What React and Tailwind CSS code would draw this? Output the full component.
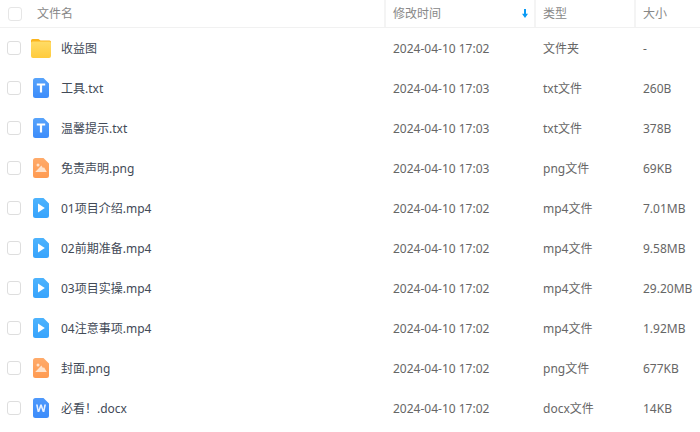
const rows = [
  ["folder", "收益图", "2024-04-10 17:02", "文件夹", "-"],
  ["txt", "工具.txt", "2024-04-10 17:03", "txt文件", "260B"],
  ["txt", "温馨提示.txt", "2024-04-10 17:03", "txt文件", "378B"],
  ["png", "免责声明.png", "2024-04-10 17:03", "png文件", "69KB"],
  ["mp4", "01项目介绍.mp4", "2024-04-10 17:02", "mp4文件", "7.01MB"],
  ["mp4", "02前期准备.mp4", "2024-04-10 17:02", "mp4文件", "9.58MB"],
  ["mp4", "03项目实操.mp4", "2024-04-10 17:02", "mp4文件", "29.20MB"],
  ["mp4", "04注意事项.mp4", "2024-04-10 17:02", "mp4文件", "1.92MB"],
  ["png", "封面.png", "2024-04-10 17:02", "png文件", "677KB"],
  ["docx", "必看！.docx", "2024-04-10 17:02", "docx文件", "14KB"],
];

const SHEET = "M2.5 0H10.5L16 5.5V17.5A2.5 2.5 0 0 1 13.5 20H2.5A2.5 2.5 0 0 1 0 17.5V2.5A2.5 2.5 0 0 1 2.5 0Z";

function FileBase({ id, from, to, children }) {
  return (
    <svg width="16" height="20" viewBox="0 0 16 20">
      <defs>
        <linearGradient id={id} x1="0" y1="0" x2="0" y2="1">
          <stop offset="0" stopColor={from} />
          <stop offset="1" stopColor={to} />
        </linearGradient>
      </defs>
      <path d={SHEET} fill={`url(#${id})`} />
      {children}
    </svg>
  );
}

function Icon({ type, idx }) {
  if (type === "folder") {
    return (
      <svg width="20" height="19" viewBox="0 0 20 19">
        <defs>
          <linearGradient id="folderg" x1="0" y1="0" x2="0" y2="1">
            <stop offset="0" stopColor="#ffdc66" />
            <stop offset="1" stopColor="#ffcb3d" />
          </linearGradient>
        </defs>
        <path d="M1.5 0H7.5L9.5 1.5H18.5A1.5 1.5 0 0 1 20 3V6H0V1.5A1.5 1.5 0 0 1 1.5 0Z" fill="#fbb41c" />
        <path d="M1.5 2.5H18.5A1.5 1.5 0 0 1 20 4V17A2 2 0 0 1 18 19H2A2 2 0 0 1 0 17V4A1.5 1.5 0 0 1 1.5 2.5Z" fill="url(#folderg)" />
      </svg>
    );
  }
  if (type === "txt") {
    return (
      <FileBase id={`t${idx}`} from="#58a4fb" to="#3c8cfb">
        <path d="M3.8 5.5H12.2V7.6H9.1V14.5H6.9V7.6H3.8Z" fill="#fff" />
      </FileBase>
    );
  }
  if (type === "png") {
    return (
      <FileBase id={`p${idx}`} from="#ffab6b" to="#ff9a50">
        <circle cx="5" cy="7" r="1.5" fill="#ffe3cc" />
        <path d="M2.2 14L8.4 7.5L10 10L11 9.2L13.8 14Z" fill="#ffe3cc" />
      </FileBase>
    );
  }
  if (type === "mp4") {
    return (
      <FileBase id={`m${idx}`} from="#4db3fd" to="#36a3fd">
        <path d="M5 5.5L11.8 10L5 14.5Z" fill="#fff" />
      </FileBase>
    );
  }
  return (
    <FileBase id={`d${idx}`} from="#4f99fb" to="#3c8cfb">
      <path d="M3 6.5H4.7L5.6 11.5L7.2 6.5H8.8L10.4 11.5L11.3 6.5H13L11.4 14H9.7L8 9.2L6.3 14H4.6Z" fill="#e8f1ff" />
    </FileBase>
  );
}

function Check({ className }) {
  return <span className={`block w-[14px] h-[14px] rounded-[3px] border border-[#dedede] bg-white ${className}`} />;
}

export default function App() {
  return (
    <div
      className="w-[700px] h-[432px] overflow-hidden bg-white text-[12px]"
      style={{ fontFamily: '"Noto Sans", "Noto Sans CJK SC", sans-serif' }}
    >
      <div className="flex h-[28px] items-center border-b border-[#f1f1f1] text-[#888]">
        <div className="w-[384px] flex items-center">
          <Check className="ml-[8px] border-[#e6e6e6]" />
          <span className="ml-[15px] leading-[16px]">文件名</span>
        </div>
        <div className="w-[150px] h-full flex items-center justify-between pl-[7px] pr-[6px] border-l-2 border-[#f4f4f4]">
          <span>修改时间</span>
          <svg width="6" height="9" viewBox="0 0 6 9">
            <path d="M2 0H4V4.8H6L3 9L0 4.8H2Z" fill="#0a9bf5" />
          </svg>
        </div>
        <div className="w-[100px] h-full flex items-center pl-[7px] border-l-2 border-[#f4f4f4]">类型</div>
        <div className="flex-1 h-full flex items-center pl-[7px] border-l-2 border-[#f4f4f4]">大小</div>
      </div>
      {rows.map((r, i) => (
        <div key={i} className="flex h-[40px] items-center text-[#666]">
          <div className="w-[385px] flex items-center">
            <Check className="ml-[7px]" />
            <span className="w-[40px] flex justify-center">
              <Icon type={r[0]} idx={i} />
            </span>
            <span className="pt-[2px] text-[#424a57]">{r[1]}</span>
          </div>
          <div className="w-[150px] pt-[2px] pl-[8px] whitespace-nowrap">{r[2]}</div>
          <div className="w-[100px] pt-[2px] pl-[8px]">{r[3]}</div>
          <div className="flex-1 pt-[2px] pl-[8px] whitespace-nowrap">{r[4]}</div>
        </div>
      ))}
    </div>
  );
}
